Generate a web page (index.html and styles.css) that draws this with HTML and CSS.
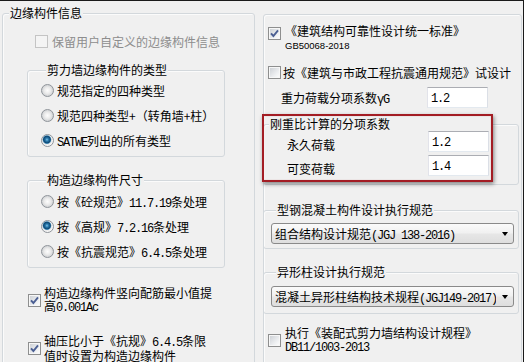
FILE: index.html
```html
<!DOCTYPE html>
<html lang="zh-CN">
<head>
    <meta charset="UTF-8">
    <meta name="viewport" content="width=device-width, initial-scale=1.0">
    <title>边缘构件信息</title>
    <link rel="stylesheet" href="styles.css">
</head>
<body>
    <div class="frame">
        <!-- 左侧：边缘构件信息 -->
        <fieldset class="grp grp-main">
            <legend>边缘构件信息</legend>
            <div class="opt opt-keep off"><span class="chk"></span><span>保留用户自定义的边缘构件信息</span></div>

            <fieldset class="grp sub sub-type">
                <legend>剪力墙边缘构件的类型</legend>
                <div class="radio-row"><span class="rad"></span><span>规范指定的四种类型</span></div>
                <div class="radio-row"><span class="rad"></span><span>规范四种类型+（转角墙+柱）</span></div>
                <div class="radio-row"><span class="rad on"></span><span><span class="a">SATWE</span>列出的所有类型</span></div>
            </fieldset>

            <fieldset class="grp sub sub-size">
                <legend>构造边缘构件尺寸</legend>
                <div class="radio-row"><span class="rad"></span><span>按《砼规范》<span class="a">11.7.19</span>条处理</span></div>
                <div class="radio-row"><span class="rad on"></span><span>按《高规》<span class="a">7.2.16</span>条处理</span></div>
                <div class="radio-row"><span class="rad"></span><span>按《抗震规范》<span class="a">6.4.5</span>条处理</span></div>
            </fieldset>

            <div class="opt opt-min">
                <span class="chk"><svg viewBox="0 0 11 11" width="11" height="11"><path d="M2 5.3 4.4 8 9 2.4" fill="none" stroke="#4b5f93" stroke-width="1.9"/></svg></span>
                <span class="two">构造边缘构件竖向配筋最小值提<br>高<span class="a">0.001Ac</span></span>
            </div>
            <div class="opt opt-axial">
                <span class="chk"><svg viewBox="0 0 11 11" width="11" height="11"><path d="M2 5.3 4.4 8 9 2.4" fill="none" stroke="#4b5f93" stroke-width="1.9"/></svg></span>
                <span class="two">轴压比小于《抗规》<span class="a">6.4.5</span>条限<br>值时设置为构造边缘构件</span>
            </div>
        </fieldset>

        <!-- 右侧：规范与系数 -->
        <div class="grp side">
            <div class="opt opt-std">
                <span class="chk"><svg viewBox="0 0 11 11" width="11" height="11"><path d="M2 5.3 4.4 8 9 2.4" fill="none" stroke="#4b5f93" stroke-width="1.9"/></svg></span>
                <span class="two">《建筑结构可靠性设计统一标准》<br><span class="gb">GB50068-2018</span></span>
            </div>
            <div class="opt opt-trial"><span class="chk"></span><span>按《建筑与市政工程抗震通用规范》试设计</span></div>
            <div class="field field-g">
                <span class="lbl">重力荷载分项系数<span class="a">γG</span></span>
                <span class="txt"><span class="a">1.2</span></span>
            </div>

            <div class="stiff">
                <fieldset class="grp sub-r sub-stiff">
                    <legend>刚重比计算的分项系数</legend>
                    <div class="field">
                        <span class="lbl">永久荷载</span>
                        <span class="txt"><span class="a">1.2</span></span>
                    </div>
                    <div class="field">
                        <span class="lbl">可变荷载</span>
                        <span class="txt"><span class="a">1.4</span></span>
                    </div>
                </fieldset>
                <div class="mark"></div>
            </div>

            <fieldset class="grp sub-r sub-steel">
                <legend>型钢混凝土构件设计执行规范</legend>
                <div class="combo">
                    <span class="combo-text">组合结构设计规范<span class="a">(JGJ 138-2016)</span></span>
                    <span class="combo-arrow"></span>
                </div>
            </fieldset>

            <fieldset class="grp sub-r sub-shape">
                <legend>异形柱设计执行规范</legend>
                <div class="combo">
                    <span class="combo-text">混凝土异形柱结构技术规程<span class="a">(JGJ149-2017)</span></span>
                    <span class="combo-arrow"></span>
                </div>
            </fieldset>

            <div class="opt opt-prefab">
                <span class="chk"></span>
                <span class="two">执行《装配式剪力墙结构设计规程》<br><span class="a">DB11/1003-2013</span></span>
            </div>
        </div>
    </div>
</body>
</html>
```

FILE: styles.css
```css
* {
    margin: 0;
    padding: 0;
    box-sizing: border-box;
}

body {
    background-color: #fff;
    font-family: "Noto Sans CJK SC", sans-serif;
    font-size: 12px;
    color: #000;
}

.frame {
    width: 524px;
    height: 362px;
    border-top: 1px solid #1a1a1a;
    border-right: 1px solid #1a1a1a;
    background-color: #f0f0f0;
    display: flex;
    align-items: flex-start;
    overflow: hidden;
}

/* 分组框 */
.grp {
    border: 1px solid #d3d8dc;
    border-radius: 3px;
    box-shadow: inset 1px 1px #fbfbfb;
    min-width: 0;
}

.grp legend {
    line-height: 14px;
    padding: 0 1px;
    background-color: #f0f0f0;
}

.grp-main {
    margin: 5px 0 0 2px;
    width: 253px;
    height: 420px;
}

.grp-main > legend {
    margin-left: 6px;
}

.side {
    margin: 13px 0 0 8px;
    width: 259px;
    height: 420px;
}

/* 半角字符 */
.a {
    font-family: "Liberation Mono", monospace;
    font-size: 12px;
    letter-spacing: -1.2px;
}

.gb {
    font-family: "Liberation Sans", sans-serif;
    font-size: 9.5px;
}

/* 复选框 */
.opt {
    display: flex;
    align-items: center;
}

.chk {
    flex: none;
    width: 13px;
    height: 13px;
    border: 1px solid #8e8f8f;
    background: linear-gradient(135deg, #c9cdd2 0%, #eceef0 60%, #fff 100%);
    box-shadow: inset 0 0 0 1px #f7f7f7;
    display: flex;
}

.off {
    color: #8d8d8d;
}

.off .chk {
    border-color: #c4c4c4;
    background: #f4f4f4;
    box-shadow: none;
}

.two {
    line-height: 12.5px;
}

.opt-keep {
    margin: 13px 0 0 32px;
    height: 16px;
    gap: 4px;
}

.opt-min {
    margin: 19px 0 0 25px;
    gap: 3px;
}

.opt-axial {
    margin: 21px 0 0 25px;
    gap: 3px;
}

/* 单选 */
.sub {
    margin-left: 24px;
    width: 198px;
    padding: 1px 0 3px 13px;
}

.sub > legend {
    margin-left: 5px;
}

.sub-type {
    margin-top: 14px;
}

.sub-size {
    margin-top: 16px;
    padding-top: 2px;
}

.radio-row {
    height: 25px;
    display: flex;
    align-items: center;
    gap: 3px;
}

.rad {
    flex: none;
    width: 13px;
    height: 13px;
    border-radius: 50%;
    border: 1px solid #8f949a;
    background: radial-gradient(circle, #fdfdfd 0, #ececec 3px, #d2d4d6 5.5px);
}

.rad.on {
    background: radial-gradient(circle at 45% 42%, #86c4e6 0, #2a7cb0 1.5px, #0e4670 3.4px, #4d8fba 4px, #e9e9e9 4.7px, #f7f7f7 6px);
}

/* 右侧 */
.opt-std {
    margin: 10px 0 0 4px;
    align-items: flex-start;
    gap: 4px;
}

.opt-std .chk {
    margin-top: 2px;
}

.opt-trial {
    margin: 12px 0 0 4px;
    height: 16px;
    gap: 2px;
}

.opt-prefab {
    margin: 13px 0 0 4px;
    gap: 4px;
}

.field {
    display: flex;
    height: 21px;
}

.lbl {
    line-height: 21px;
}

.field-g {
    margin-top: 7px;
}

.field-g .lbl {
    flex: 0 0 163px;
    padding-left: 17px;
}

.txt {
    width: 61px;
    height: 21px;
    background-color: #fff;
    border: 1px solid;
    border-color: #abadb3 #dbdfe6 #e3e9ef #e2e3ea;
    padding: 2px 0 0 3px;
    line-height: 14px;
}

.sub-r {
    margin-left: -1px;
    width: 256px;
}

.sub-r > legend {
    margin-left: 5px;
}

.stiff {
    position: relative;
    margin: 9px 0 0 -1px;
}

.sub-stiff {
    margin-left: 0;
    padding-bottom: 8px;
}

.sub-stiff > legend {
    width: 222px;
}

.sub-stiff .field + .field {
    margin-top: 3px;
}

.sub-stiff .lbl {
    flex: 0 0 164px;
    padding-left: 23px;
    align-self: flex-end;
    line-height: 14px;
}

/* 红色标注框 */
.mark {
    position: absolute;
    left: -1px;
    top: -3px;
    width: 231px;
    height: 68px;
    border: 2px solid #a31d24;
    box-shadow: 1px 2px 4px rgba(0, 0, 0, 0.45), inset 0 0 1px rgba(160, 40, 50, 0.5);
    pointer-events: none;
}

.sub-steel {
    margin-top: 18px;
    padding: 6px 0 4px 7px;
}

.sub-shape {
    margin-top: 16px;
    padding: 7px 0 6px 7px;
}

/* 下拉框 */
.combo {
    display: flex;
    width: 243px;
    height: 21px;
    border: 1px solid #8a8a8a;
    border-radius: 3px;
    background: linear-gradient(#fbfbfb, #f1f1f1 45%, #e6e6e6 55%, #dedede);
}

.combo-text {
    flex: 1;
    overflow: hidden;
    white-space: nowrap;
    padding-left: 3px;
    line-height: 19px;
}

.combo-arrow {
    flex: none;
    width: 17px;
    display: flex;
    align-items: center;
    justify-content: center;
}

.combo-arrow::after {
    content: "";
    border-left: 3.5px solid transparent;
    border-right: 3.5px solid transparent;
    border-top: 4px solid #000;
}
```
